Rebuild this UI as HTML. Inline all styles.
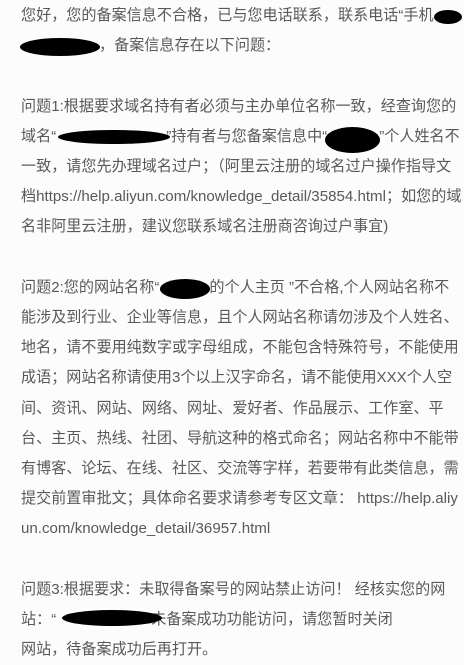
<!DOCTYPE html>
<html><head><meta charset="utf-8"><style>
html,body{margin:0;padding:0;background:#fcfcfc;}
body{width:464px;height:664px;overflow:hidden;position:relative;}
.t{position:absolute;left:21px;top:1px;font-family:"Liberation Sans","Noto Sans CJK SC",sans-serif;font-size:15.1px;line-height:30.2px;color:#595959;white-space:nowrap;}
.b{position:absolute;background:#000;border-radius:50%;}
</style></head><body>
<div class="t">
您好，您的备案信息不合格，已与您电话联系，联系电话“手机<br>
<span style="display:inline-block;width:78px"></span>，备案信息存在以下问题：<br>
<br>
问题1:根据要求域名持有者必须与主办单位名称一致，经查询您的<br>
域名“<span style="display:inline-block;width:110px"></span>”持有者与您备案信息中“<span style="display:inline-block;width:52px"></span>”个人姓名不<br>
一致，请您先办理域名过户；（阿里云注册的域名过户操作指导文<br>
档https://help.aliyun.com/knowledge_detail/35854.html；如您的域<br>
名非阿里云注册，建议您联系域名注册商咨询过户事宜)<br>
<br>
问题2:您的网站名称“<span style="display:inline-block;width:50px"></span>的个人主页 ”不合格,个人网站名称不<br>
能涉及到行业、企业等信息，且个人网站名称请勿涉及个人姓名、<br>
地名，请不要用纯数字或字母组成，不能包含特殊符号，不能使用<br>
成语；网站名称请使用3个以上汉字命名，请不能使用XXX个人空<br>
间、资讯、网站、网络、网址、爱好者、作品展示、工作室、平<br>
台、主页、热线、社团、导航这种的格式命名；网站名称中不能带<br>
有博客、论坛、在线、社区、交流等字样，若要带有此类信息，需<br>
提交前置审批文；具体命名要求请参考专区文章： https://help.aliy<br>
un.com/knowledge_detail/36957.html<br>
<br>
问题3:根据要求：未取得备案号的网站禁止访问！ 经核实您的网<br>
站：“<span style="display:inline-block;width:90px"></span>”未备案成功功能访问，请您暂时关闭<br>
网站，待备案成功后再打开。
</div>
<div class="b" style="left:434px;top:10px;width:28px;height:14px"></div>
<div class="b" style="left:20px;top:38px;width:80px;height:18px"></div>
<div class="b" style="left:58px;top:130px;width:112px;height:14px"></div>
<div class="b" style="left:325px;top:127px;width:55px;height:26px"></div>
<div class="b" style="left:160px;top:279px;width:50px;height:20px"></div>
<div class="b" style="left:62px;top:610px;width:100px;height:16px"></div>
</body></html>
